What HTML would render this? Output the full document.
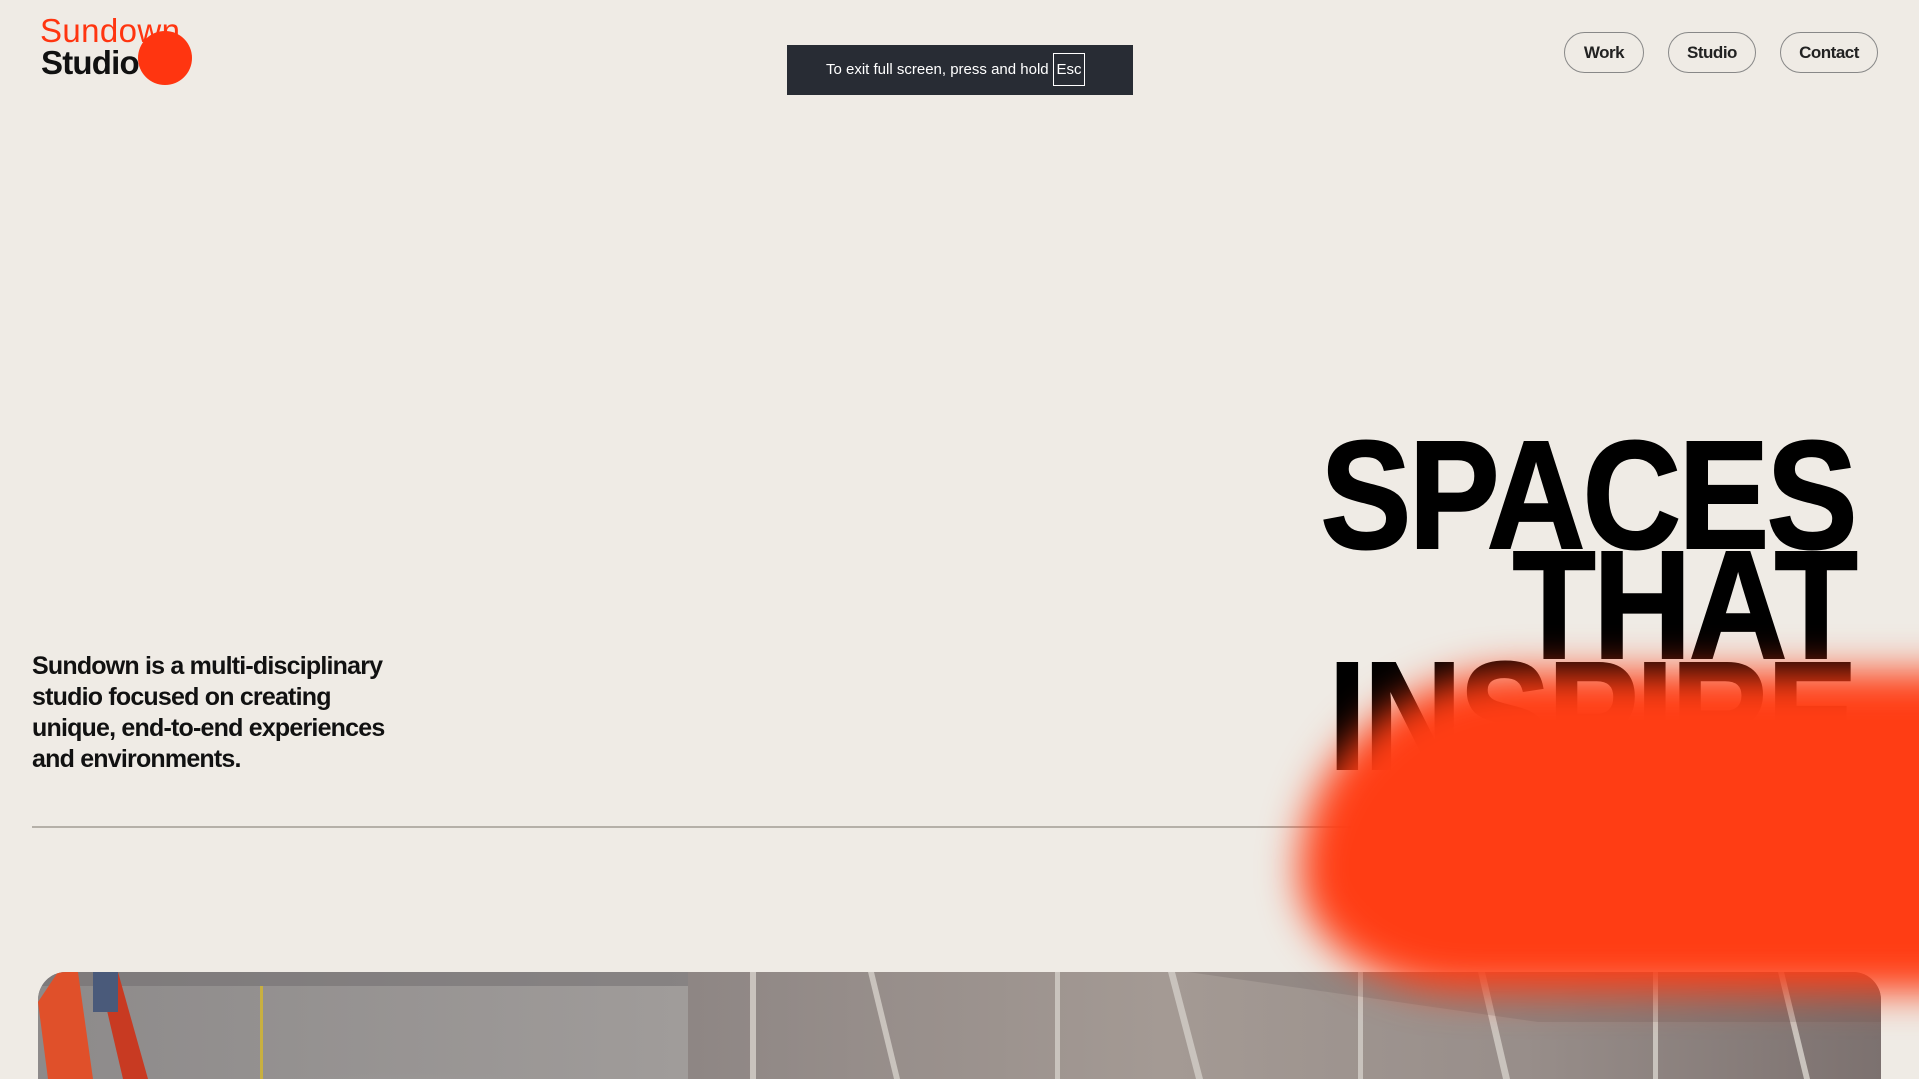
<!DOCTYPE html>
<html><head><meta charset="utf-8"><style>
*{margin:0;padding:0;box-sizing:border-box}
html,body{width:1919px;height:1079px;overflow:hidden;background:#efebe5;font-family:"Liberation Sans",Arial,sans-serif}
#w{position:relative;width:1919px;height:1079px;overflow:hidden}
.abs{position:absolute}
.logo1{left:40px;top:12px;font-size:33px;color:#ff3510;letter-spacing:0.4px;line-height:38px}
.logo2{left:41px;top:44px;font-size:33px;font-weight:bold;color:#111;letter-spacing:-0.8px;line-height:38px;z-index:2}
.dot{left:138px;top:31px;width:54px;height:54px;border-radius:50%;background:#ff3510;z-index:3}
.toast{left:787px;top:45px;width:346px;height:50px;background:#282c34;color:#fff;font-size:15px}
.toast span{position:absolute;left:39px;top:16px}
.esc{position:absolute;left:266px;top:8px;width:32px;height:33px;border:1px solid #fff;font-size:15px;text-align:center;line-height:31px}
.nav{top:32px;height:41px;border:1px solid #888;border-radius:21px;font-size:17px;font-weight:bold;color:#222;text-align:center;line-height:39px;letter-spacing:-0.5px}
.h{right:64px;font-size:154px;font-weight:bold;color:#000;-webkit-text-stroke:2px #000;letter-spacing:-3px;line-height:110px;text-align:right;transform:scaleX(0.885);transform-origin:right top;white-space:nowrap}
.p{left:32px;top:651px;font-size:25px;font-weight:bold;line-height:31px;letter-spacing:-0.8px;color:#111}
.line{left:32px;top:826px;width:1400px;height:2px;background:#b5b0a8}
.img{left:38px;top:972px;width:1843px;height:107px;border-radius:28px 28px 0 0;overflow:hidden;background:#8c8380}
.blob{left:1300px;top:672px;width:780px;height:320px;background:#ff3d14;border-radius:260px 120px 120px 200px/240px 120px 120px 140px;filter:blur(20px);z-index:5}
</style></head><body><div id="w">
<div class="abs logo1">Sundown</div>
<div class="abs dot"></div>
<div class="abs logo2">Studio</div>
<div class="abs toast"><span>To exit full screen, press and hold</span><div class="esc">Esc</div></div>
<div class="abs nav" style="left:1564px;width:80px">Work</div>
<div class="abs nav" style="left:1668px;width:88px">Studio</div>
<div class="abs nav" style="left:1780px;width:98px">Contact</div>
<div class="abs h" style="top:440px">SPACES</div>
<div class="abs h" style="top:550px">THAT</div>
<div class="abs h" style="top:661px">INSPIRE</div>
<div class="abs p">Sundown is a multi-disciplinary<br>studio focused on creating<br>unique, end-to-end experiences<br>and environments.</div>
<div class="abs line"></div>
<div class="abs img">
<svg width="1843" height="107" viewBox="0 0 1843 107">
<defs>
<linearGradient id="g1" x1="0" y1="0" x2="1" y2="0"><stop offset="0" stop-color="#8d8a8a"/><stop offset="1" stop-color="#a09c9a"/></linearGradient>
<radialGradient id="gl" cx="0.5" cy="1" r="0.6"><stop offset="0" stop-color="#fffbe8"/><stop offset="0.5" stop-color="#d8d4cc" stop-opacity="0.7"/><stop offset="1" stop-color="#999" stop-opacity="0"/></radialGradient>
<linearGradient id="g2" x1="0" y1="0" x2="1" y2="0"><stop offset="0" stop-color="#8e8684"/><stop offset="0.4" stop-color="#a49a94"/><stop offset="0.7" stop-color="#988e8a"/><stop offset="1" stop-color="#7c716f"/></linearGradient>
</defs>
<rect x="0" y="0" width="650" height="107" fill="url(#g1)"/>
<ellipse cx="380" cy="115" rx="300" ry="80" fill="url(#gl)"/>
<rect x="0" y="0" width="650" height="14" fill="#6d6a6c" opacity="0.5"/>
<rect x="222" y="14" width="3" height="93" fill="#c8b040"/>
<polygon points="0,30 20,0 40,0 55,107 10,107" fill="#e0502a"/>
<polygon points="60,0 80,0 110,107 85,107" fill="#c83a22"/>
<polygon points="55,0 80,0 80,40 55,40" fill="#4a5a7a"/>
<rect x="650" y="0" width="1193" height="107" fill="url(#g2)"/>
<g fill="#c9c3bd">
<rect x="712" y="0" width="6" height="107"/><rect x="1017" y="0" width="5" height="107"/><rect x="1320" y="0" width="5" height="107"/><rect x="1615" y="0" width="5" height="107"/>
<polygon points="830,0 836,0 862,107 856,107"/><polygon points="1130,0 1137,0 1165,107 1158,107"/><polygon points="1440,0 1447,0 1472,107 1465,107"/><polygon points="1740,0 1746,0 1772,107 1766,107"/>
</g>
<polygon points="1150,0 1843,0 1843,50 1500,50" fill="#5e5454" opacity="0.2"/>
</svg>
</div>
<div class="abs blob"></div>
</div></body></html>
